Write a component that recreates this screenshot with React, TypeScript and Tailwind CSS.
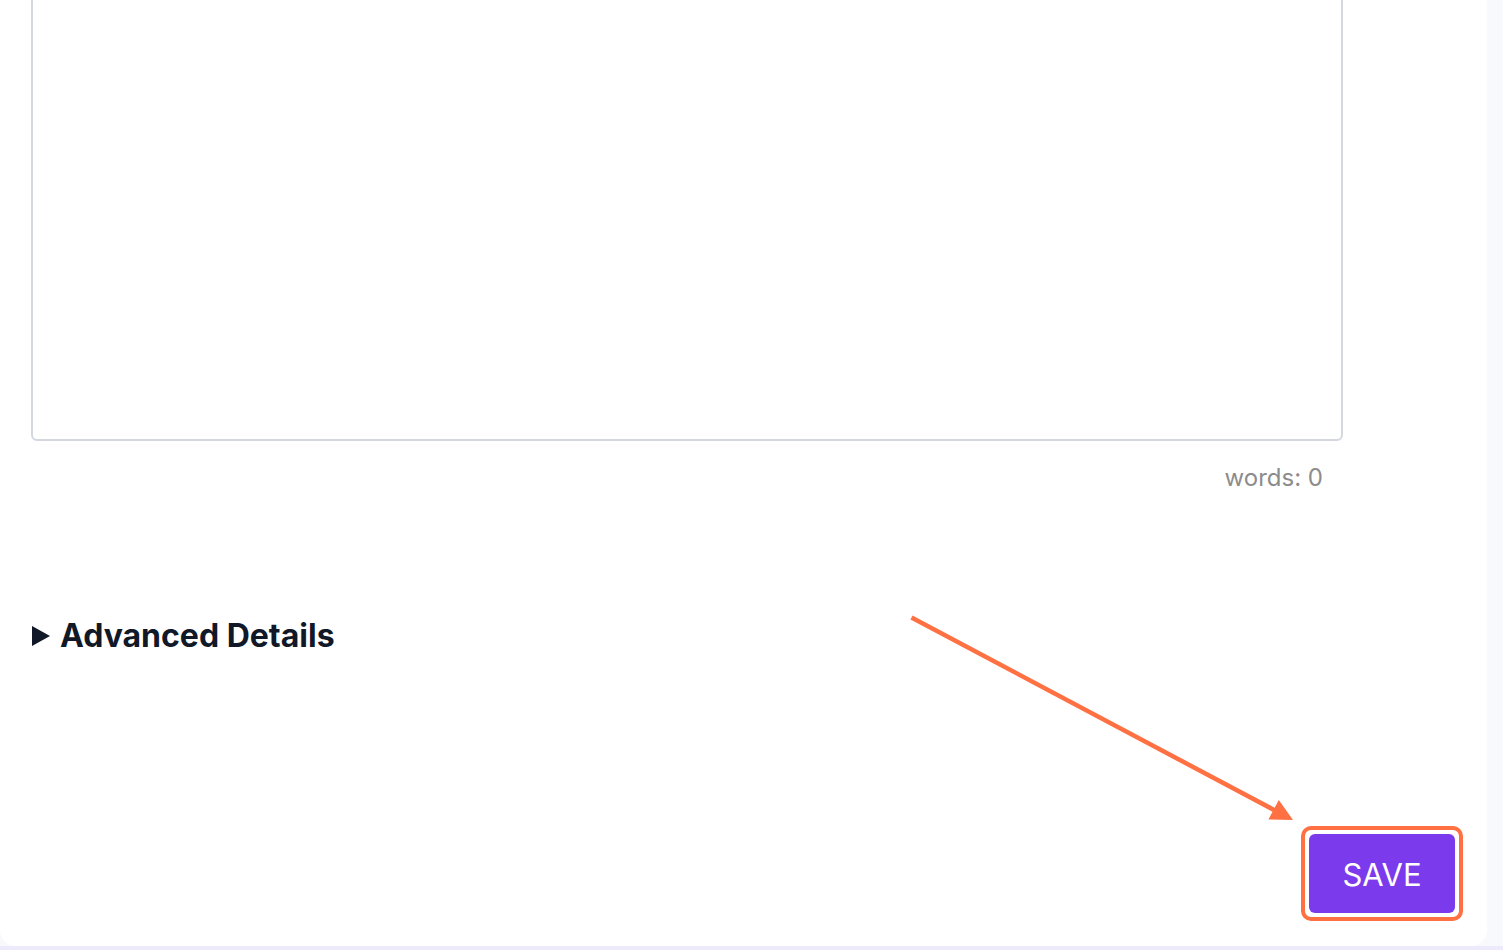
import React from "react";

export default function App() {
  return (
    <div className="relative flex h-[950px] w-[1503px] flex-col overflow-hidden bg-[#f8f9fc] font-['Inter',sans-serif]">
      <div className="flex h-[946px]">
        <div className="flex h-full w-[1487px] flex-col rounded-b-2xl bg-white pl-[31px]">
          <div className="mt-[-20px] h-[461px] w-[1312px] rounded-md border-2 border-[#d4d8de]" />
          <div className="mt-[22px] w-[1292px] text-right text-[24px] leading-[30px] text-[#8c8c8c]">
            words: 0
          </div>
          <div className="mt-[123px] flex items-center gap-[10px] text-[#111827]">
            <svg width="18" height="20" viewBox="0 0 18 20" className="ml-[1px]">
              <polygon points="0,0 18,10 0,20" fill="#111827" />
            </svg>
            <span className="text-[32px] font-bold leading-[40px]">Advanced Details</span>
          </div>
          <div className="mt-auto mb-[25px] mr-[24px] flex justify-end">
            <div className="rounded-[10px] border-4 border-[#ff7043] p-[4px]">
              <button className="flex h-[79px] w-[146px] items-center justify-center rounded-md bg-[#7c3aed] pt-[3px] text-[31px] font-normal text-white">
                SAVE
              </button>
            </div>
          </div>
        </div>
      </div>
      <div className="h-[4px] bg-[#edebfb]" />
      <svg
        className="pointer-events-none absolute left-0 top-0"
        width="1503"
        height="950"
        viewBox="0 0 1503 950"
      >
        <line x1="911.5" y1="617.5" x2="1275" y2="810.5" stroke="#ff7043" strokeWidth="4.5" />
        <polygon points="1293,820 1268.4,819.4 1278.8,800" fill="#ff7043" />
      </svg>
    </div>
  );
}
